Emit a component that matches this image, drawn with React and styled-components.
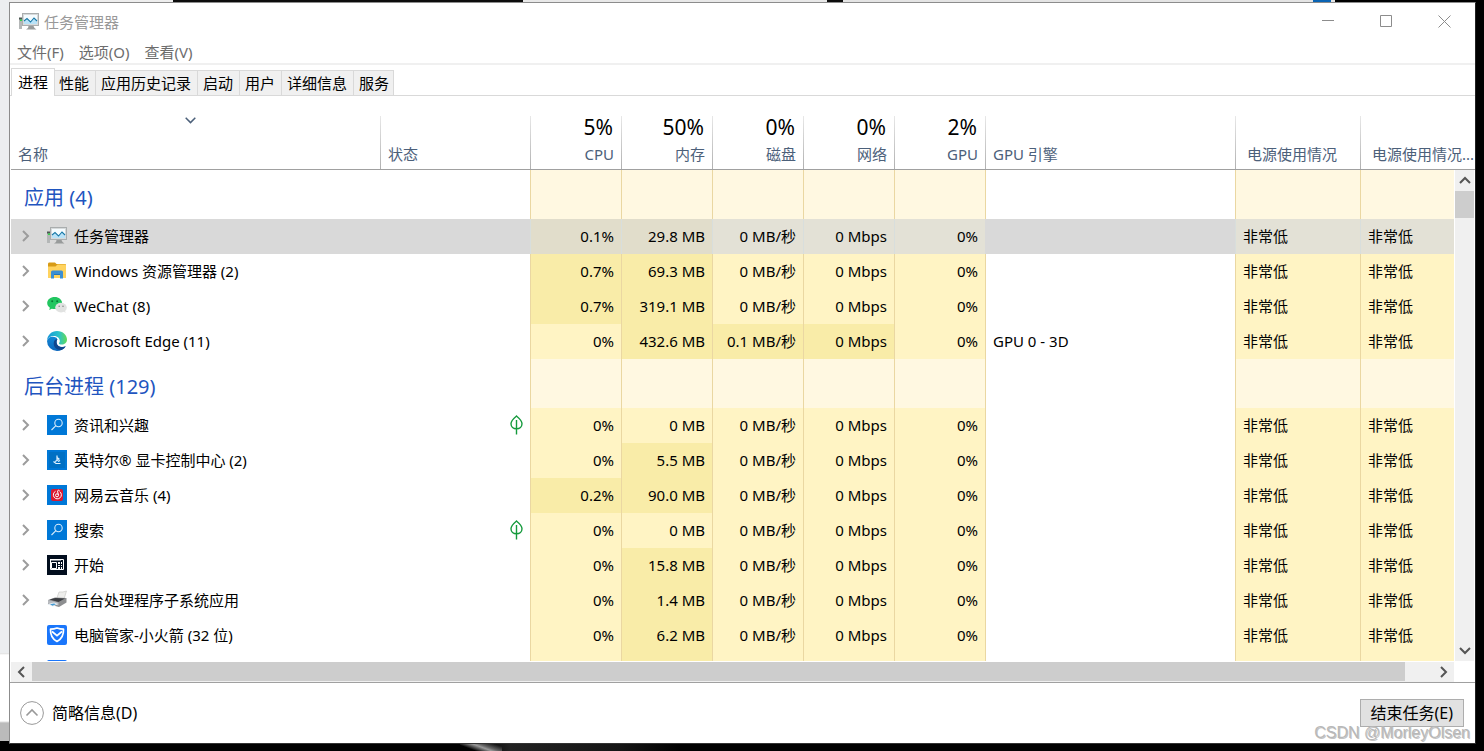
import React from "react";
import styled, { createGlobalStyle, css } from "styled-components";

const columns = [
  { key: "cpu", total: "5%", label: "CPU" },
  { key: "memory", total: "50%", label: "内存" },
  { key: "disk", total: "0%", label: "磁盘" },
  { key: "network", total: "0%", label: "网络" },
  { key: "gpu", total: "2%", label: "GPU" },
];

const idle = { cpu: "0%", memory: "0 MB", disk: "0 MB/秒", network: "0 Mbps", gpu: "0%" };

const groups = [
  {
    title: "应用 (4)",
    rows: [
      { name: "任务管理器", icon: MonitorIcon, cpu: "0.1%", memory: "29.8 MB", hot: ["cpu", "memory"], selected: true },
      { name: "Windows 资源管理器 (2)", icon: FolderIcon, cpu: "0.7%", memory: "69.3 MB", hot: ["cpu", "memory"] },
      { name: "WeChat (8)", icon: WeChatIcon, cpu: "0.7%", memory: "319.1 MB", hot: ["cpu", "memory"] },
      {
        name: "Microsoft Edge (11)",
        icon: EdgeIcon,
        memory: "432.6 MB",
        disk: "0.1 MB/秒",
        engine: "GPU 0 - 3D",
        hot: ["memory", "disk", "network"],
      },
    ],
  },
  {
    title: "后台进程 (129)",
    rows: [
      { name: "资讯和兴趣", icon: SearchIcon, leaf: true },
      { name: "英特尔® 显卡控制中心 (2)", icon: IntelIcon, memory: "5.5 MB", hot: ["memory"] },
      { name: "网易云音乐 (4)", icon: MusicIcon, cpu: "0.2%", memory: "90.0 MB", hot: ["cpu", "memory"] },
      { name: "搜索", icon: SearchIcon, leaf: true },
      { name: "开始", icon: StartIcon, memory: "15.8 MB", hot: ["memory"] },
      { name: "后台处理程序子系统应用", icon: PrinterIcon, memory: "1.4 MB", hot: ["memory"] },
      { name: "电脑管家-小火箭 (32 位)", icon: ShieldIcon, memory: "6.2 MB", hot: ["memory"], single: true },
      { icon: ShieldIcon, hot: ["memory"], single: true, blank: true },
    ],
  },
];

const tabs = ["进程", "性能", "应用历史记录", "启动", "用户", "详细信息", "服务"];

export default function App() {
  return (
    <Desktop>
      <GlobalStyle />
      <Window>
        <TitleBar>
          <MonitorIcon />
          <Title>任务管理器</Title>
          <CaptionButton aria-label="最小化">
            <svg width="13" height="13"><path d="M0 5.500h12" /></svg>
          </CaptionButton>
          <CaptionButton aria-label="最大化">
            <svg width="13" height="13"><path d="M.5.5h11v11H.5z" /></svg>
          </CaptionButton>
          <CaptionButton aria-label="关闭">
            <svg width="13" height="13"><path d="M.5.5l12 12M12.500.5l-12 12" /></svg>
          </CaptionButton>
        </TitleBar>

        <MenuBar>
          <MenuItem>文件(F)</MenuItem>
          <MenuItem>选项(O)</MenuItem>
          <MenuItem>查看(V)</MenuItem>
        </MenuBar>

        <TabList role="tablist">
          {tabs.map((tab, i) => (
            <Tab key={tab} role="tab" aria-selected={i === 0} $active={i === 0}>
              {tab}
            </Tab>
          ))}
        </TabList>

        <Content>
          <Viewport>
            <ProcessTable />
          </Viewport>
          <VerticalScroll>
            <Arrow label="向上滚动" d="M1 8l5-5 5 5" />
            <Thumb $length="27px" />
            <Spacer />
            <Arrow label="向下滚动" d="M1 3l5 5 5-5" />
          </VerticalScroll>
        </Content>
        <HorizontalScroll>
          <Arrow label="向左滚动" d="M8 1L3 6l5 5" />
          <Track>
            <Thumb $length="98%" />
          </Track>
          <Arrow label="向右滚动" d="M3 1l5 5-5 5" />
        </HorizontalScroll>

        <Footer>
          <DetailsButton>
            <svg width="24" height="24" viewBox="0 0 24 24">
              <circle cx="12" cy="12" r="11.400" />
              <path d="M6.500 14.500L12 9l5.500 5.500" strokeWidth="1.600" />
            </svg>
            简略信息(D)
          </DetailsButton>
          <EndTask>结束任务(E)</EndTask>
        </Footer>
      </Window>
      <Watermark>CSDN @MorleyOlsen</Watermark>
    </Desktop>
  );
}

function ProcessTable() {
  return (
    <Table>
      <colgroup>
        <col />
        <Col $width={150} />
        {columns.map((c) => (
          <Col key={c.key} $width={91} />
        ))}
        <Col $width={250} />
        <Col $width={125} />
        <Col $width={115} />
      </colgroup>
      <thead>
        <tr>
          <HeadCell $first>
            <SortMark>
              <svg width="11" height="7"><path d="M.7.8l4.800 4.800L10.300.8" /></svg>
            </SortMark>
            名称
          </HeadCell>
          <HeadCell>状态</HeadCell>
          {columns.map((c) => (
            <HeadCell key={c.key} $number>
              <Total>{c.total}</Total>
              {c.label}
            </HeadCell>
          ))}
          <HeadCell>GPU 引擎</HeadCell>
          <HeadCell $inset>电源使用情况</HeadCell>
          <HeadCell $inset>电源使用情况...</HeadCell>
        </tr>
      </thead>
      {groups.map((group) => (
        <tbody key={group.title}>
          <GroupRow>
            <GroupTitle scope="rowgroup" colSpan={2}>{group.title}</GroupTitle>
            {columns.map((c) => (
              <Heat key={c.key} $level="group" />
            ))}
            <PlainCell $line />
            <Heat $level="group" />
            <Heat $level="group" />
          </GroupRow>
          {group.rows.map((row, i) => (
            <Process key={i} {...row} />
          ))}
        </tbody>
      ))}
    </Table>
  );
}

function Process({ name, icon: Icon, hot = [], selected, leaf, single, blank, engine, ...values }) {
  const usage = { ...idle, ...values };
  const power = blank ? "" : "非常低";
  return (
    <Row $selected={selected}>
      <PlainCell>
        <Name>
          <Expander disabled={single} aria-label="展开">
            {!single && <svg width="8" height="12"><path d="M1 1l5 5-5 5" /></svg>}
          </Expander>
          <Icon />
          {name}
        </Name>
      </PlainCell>
      <PlainCell $right>{leaf && <LeafIcon />}</PlainCell>
      {columns.map((c) => (
        <Heat key={c.key} $right $level={hot.includes(c.key) ? "high" : "low"} $selected={selected}>
          {!blank && usage[c.key]}
        </Heat>
      ))}
      <PlainCell $line={!selected}>{engine}</PlainCell>
      <Heat $level="low" $selected={selected}>{power}</Heat>
      <Heat $level="low" $selected={selected}>{power}</Heat>
    </Row>
  );
}

function Arrow({ label, d }) {
  return (
    <ScrollButton aria-label={label}>
      <svg width="12" height="12"><path d={d} /></svg>
    </ScrollButton>
  );
}

function MonitorIcon() {
  return (
    <Glyph viewBox="0 0 20 20">
      <path d="M0 6h3v11H0z" fill="#b4b7b7" />
      <path d="M0 5.500h3v2H0z" fill="#4c5653" />
      <path d="M1 7.500h2v1.500H1z" fill="#35d34a" />
      <path d="M3 1h17v13H3z" fill="#a9adae" />
      <path d="M4 2h15v11H4z" fill="#d7dadb" />
      <path d="M5 3h13v9H5z" fill="#f5fcff" />
      <path d="M5 9l3-2 3 3 4-4 3 3v3H5z" fill="#b8e2f7" />
      <path d="M5 9l3-2.500 3.500 3.500L15 6l3 3" fill="none" stroke="#1878a8" strokeWidth="1.100" />
      <path d="M9.500 14h5l1 2 2 1.500H7L9 16z" fill="#989b9b" />
    </Glyph>
  );
}

function FolderIcon() {
  return (
    <Glyph viewBox="0 0 20 20">
      <path d="M1 3q0-1.500 1-1.500h6l1.500 1.500H18q1 0 1 1v4H1z" fill="#d79b17" />
      <path d="M1 5.500h7.500L10.500 3.500H18q1 0 1 1V17H1z" fill="#ffd35f" />
      <path d="M4 17.500V11q0-1.500 1.500-1.500h9Q16 9.500 16 11v6.500h-3V13H7v4.500z" fill="#3c8fd3" />
      <path d="M7 13h6v1H7z" fill="#2576b9" />
    </Glyph>
  );
}

function WeChatIcon() {
  return (
    <Glyph viewBox="0 0 20 20">
      <path d="M7.700 1C3.500 1 .2 3.600.2 7c0 2 1.100 3.600 2.700 4.700L2.200 14l2.600-1.300c1 .3 1.900.4 2.900.4 4.100 0 7.400-2.600 7.400-6S11.800 1 7.700 1z" fill="#22c660" />
      <ellipse cx="14" cy="11.600" rx="5.800" ry="4.900" fill="#e1e2e1" />
      <path d="M16 15l2.600 2-.6-3z" fill="#e1e2e1" />
      <circle cx="5.200" cy="5.200" r="1" fill="#087b36" />
      <circle cx="10.200" cy="5.200" r="1" fill="#087b36" />
      <circle cx="12.200" cy="10.300" r=".8" fill="#888" />
      <circle cx="16" cy="10.300" r=".8" fill="#888" />
    </Glyph>
  );
}

function EdgeIcon() {
  return (
    <Glyph viewBox="0 0 20 20">
      <defs>
        <linearGradient id="edge-top" x1="0" x2="1">
          <stop offset="0" stopColor="#1596da" />
          <stop offset=".6" stopColor="#2cc3c8" />
          <stop offset="1" stopColor="#63da55" />
        </linearGradient>
        <linearGradient id="edge-side" x1="0" x2="0" y1="0" y2="1">
          <stop offset="0" stopColor="#1486d4" />
          <stop offset="1" stopColor="#0b66bd" />
        </linearGradient>
      </defs>
      <path d="M0 10a10 10 0 0 0 10 10c3.700 0 6.800-1.600 8.700-4.800-4 1.900-8.700.5-9.200-3.500L10 7C5 4.500 1 6 0 10z" fill="url(#edge-side)" />
      <path d="M7.200 10c-2 5 2 9.800 7.300 8.900 1.800-.8 3.300-2 4.200-3.700-4.300 1.900-9 .3-9.100-4.200 0-1.400.6-2.200 1.200-2.700C9.200 8 7.900 8.700 7.200 10z" fill="#10458d" />
      <path d="M0 9.700C.3 4.200 4.600 0 10 0c6.100 0 10 4.300 10 8.600 0 3.400-2.500 5-5.300 5-1.900 0-2.800-.7-2.800-1.300 0-.5.900-.9.900-2.300C12.800 7.500 10.500 5 7 5 3.500 5 .8 7 0 9.700z" fill="url(#edge-top)" />
    </Glyph>
  );
}

function SearchIcon() {
  return (
    <Glyph viewBox="0 0 20 20">
      <path d="M0 0h20v20H0z" fill="#0078d7" />
      <g fill="none" stroke="#d9ecfb" strokeWidth="1.100">
        <circle cx="11.500" cy="8" r="3.700" />
        <path d="M8.900 10.600L4.500 15" />
      </g>
    </Glyph>
  );
}

function IntelIcon() {
  return (
    <Glyph viewBox="0 0 20 20">
      <path d="M0 0h20v20H0z" fill="#0078d7" />
      <path d="M2 2h16v16H2z" fill="#0070c4" />
      <path d="M10 5.500v5M10 7.500l2 1.500-2 1.500-2 1M6.500 11.500l2.500 2h4.500M11 11.500l2-1" fill="none" stroke="#e2f2ff" strokeWidth="1.200" />
    </Glyph>
  );
}

function MusicIcon() {
  return (
    <Glyph viewBox="0 0 20 20">
      <path d="M0 0h20v20H0z" fill="#0078d7" />
      <rect x="4" y="4" width="12" height="12" rx="2" fill="#dc1930" />
      <g fill="none" stroke="#fff" strokeWidth="1">
        <path d="M8.500 6.300a4 4 0 1 0 4.200.3M12.500 5.500c-1.300-.7-2.300 0-1.800 1.500l.8 3.200" />
        <circle cx="10" cy="10.300" r="1.500" />
      </g>
    </Glyph>
  );
}

function StartIcon() {
  return (
    <Glyph viewBox="0 0 20 20">
      <path d="M0 0h20v20H0z" fill="#020e1e" />
      <path d="M3.500 4.500h13v10h-13z" fill="none" stroke="#fff" />
      <path d="M3 4h11v1.500H3z" fill="#fff" />
      <path d="M4.500 7.500h5v6h-5z" fill="none" stroke="#fff" />
      <path d="M11 7h2v2h-2zM14 7h1v2h-1zM11 10h2v1h-2zM14 10h1v1h-1zM11 12h2v2h-2zM14 12h1v2h-1z" fill="#fff" />
    </Glyph>
  );
}

function PrinterIcon() {
  return (
    <Glyph viewBox="0 0 20 20">
      <path d="M9.500 9l2.500-7q4 .5 7.500-1L17 9z" fill="#eeeeec" stroke="#c3c3c1" strokeWidth=".6" />
      <path d="M1 10l7-2.500L19.500 8v4.500L12 17 1 14z" fill="#8d8e90" />
      <path d="M2.500 9.500L8.500 8l9.500.5L11.500 12z" fill="#3c3e43" />
      <path d="M1 10l10.500 2.500v3L1 13z" fill="#b8bbc0" />
      <path d="M0 14l7-1.500 4 1.500-5 2.500z" fill="#e6edf2" />
      <path d="M3 14.200l4-.7 2 .8-3.500 1.500z" fill="#469ad1" />
    </Glyph>
  );
}

function ShieldIcon() {
  return (
    <Glyph viewBox="0 0 20 20">
      <rect width="20" height="20" rx="2" fill="#1a76fb" />
      <path d="M10 3q3 1.200 6.500 1.200.4 8.500-6.500 12.300Q3.100 12.700 3.500 4.200 7 4.200 10 3z" fill="none" stroke="#fff" strokeWidth="1.700" strokeLinejoin="round" />
      <path d="M5 6.500l5 4.200 5-4.200" fill="none" stroke="#fff" strokeWidth="1.700" />
    </Glyph>
  );
}

function LeafIcon() {
  return (
    <Leaf width="13" height="20" viewBox="0 0 13 20">
      <path d="M6.500 1C3.500 3.500 1 5.500 1 8.800c0 3 2.300 5 5.500 5s5.500-2 5.500-5C12 5.500 9.500 3.500 6.500 1zM6.500 5v14.500" />
    </Leaf>
  );
}

const GlobalStyle = createGlobalStyle`
  * {
    box-sizing: border-box;
  }

  body {
    margin: 0;
    background: #000;
    font: 15px/20px "Noto Sans", "Noto Sans CJK SC", sans-serif;
  }

  button {
    border: 0;
    padding: 0;
    background: none;
    font: inherit;
    color: inherit;
  }

  svg {
    display: block;
    flex: none;
  }
`;

/* slivers of other windows show around the edges */
const Desktop = styled.div`
  position: relative;
  display: flex;
  height: 100vh;
  padding: 2px 8px 7px 9px;
  background:
    linear-gradient(20deg, transparent 25%, #999 50%, #666 60%, transparent 85%) 460px bottom / 42px 8px no-repeat,
    linear-gradient(90deg, transparent 480px, #222 510px, #151515 620px, transparent 680px) left bottom / 100% 7px no-repeat,
    linear-gradient(#eceef0 653px, #ddd 653px, #fff 655px, #fff 721px, #bbb 723px, #bbb 741px, #000 741px) left top / 9px 100% no-repeat,
    linear-gradient(
        90deg,
        #eee 173px,
        #0c0c0c 173px,
        #0c0c0c 523px,
        #e8e8e8 523px,
        #e8e8e8 827px,
        #0c0c0c 827px,
        #0c0c0c 843px,
        #e4e4e4 843px,
        #e4e4e4 1313px,
        #0a64b4 1313px,
        #0a64b4 1331px,
        #e4e4e4 1331px,
        #e4e4e4 1335px,
        #000 1335px
      )
      left top / 100% 2px no-repeat,
    #000;
`;

const Window = styled.main`
  display: flex;
  flex: 1;
  flex-direction: column;
  min-width: 0;
  border: 1px solid #8c8c8c;
  border-right-color: #222;
  border-bottom-color: #333;
  background: #fff;
`;

const TitleBar = styled.header`
  display: flex;
  align-items: center;
  height: 37px;
  padding: 0 2px 0 9px;
  color: #999;
`;

const Title = styled.h1`
  flex: 1;
  margin: 0 0 0 5px;
  font-size: 15px;
  font-weight: 400;
`;

const CaptionButton = styled.button`
  display: flex;
  align-items: center;
  justify-content: center;
  width: 58px;
  height: 100%;

  path {
    fill: none;
    stroke: #8c8c8c;
  }
`;

const MenuBar = styled.nav`
  display: flex;
  gap: 15px;
  height: 25px;
  padding-left: 7px;
  border-bottom: 2px solid #f0f0f0;
  color: #6d6d6d;
`;

const MenuItem = styled.button`
  line-height: 24px;
`;

const TabList = styled.div`
  display: flex;
  align-items: flex-end;
  height: 31px;
  padding-left: 2px;
  box-shadow: inset 0 -1px #d9d9d9;
`;

const Tab = styled.button`
  height: 26px;
  padding: 0 6px 0 5px;
  border: solid #d9d9d9;
  border-width: 1px 0 1px 1px;
  background: #f0f0f0;

  &:last-child {
    padding-right: 4px;
    border-right-width: 1px;
  }

  ${({ $active }) =>
    $active &&
    css`
      position: relative;
      height: 28px;
      margin: 0 -2px 0 -1px;
      padding: 0 6px 2px;
      border-width: 1px 1px 0;
      background: #fff;
    `}
`;

/* the scroll bar shares the table's grid cell, so the header runs above it */
const Content = styled.div`
  display: grid;
  flex: 1;
  grid-template: minmax(0, 1fr) / minmax(0, 1fr);
  min-height: 0;
  padding: 0 0 1px 1px;
`;

const Viewport = styled.div`
  grid-area: 1 / 1;
  overflow: hidden;
`;

const Table = styled.table`
  width: 100%;
  table-layout: fixed;
  border-spacing: 0;
`;

const Col = styled.col`
  width: ${({ $width }) => $width}px;
`;

const HeadCell = styled.th`
  height: 74px;
  padding: 0 ${({ $number }) => ($number ? 7 : 0)}px 5px ${({ $inset }) => ($inset ? 12 : 8)}px;
  border-bottom: 1px solid #a0a0a0;
  background: ${({ $first }) =>
    $first ? "none" : "linear-gradient(#e8e8e8, #b0b0b0) left bottom / 1px calc(100% - 20px) no-repeat"};
  color: #4c607a;
  font-weight: 400;
  text-align: ${({ $number }) => ($number ? "right" : "left")};
  vertical-align: bottom;
  white-space: nowrap;

  ${({ $first }) => $first && "padding-left: 7px;"}
`;

const Total = styled.div`
  margin: 0 1px 5px 0;
  color: #000;
  font-size: 21px;
  line-height: 24px;
`;

const SortMark = styled.div`
  display: flex;
  justify-content: center;
  margin-bottom: 20px;
  padding-right: 17px;

  path {
    fill: none;
    stroke: #4c607a;
    stroke-width: 1.5;
  }
`;

const GroupRow = styled.tr`
  height: 49px;
`;

const GroupTitle = styled.th`
  padding: 6px 0 0 13px;
  color: #1f55bf;
  font-size: 20px;
  font-weight: 400;
  line-height: 28px;
  text-align: left;
`;

const Row = styled.tr`
  height: 35px;
  background: ${({ $selected }) => ($selected ? "#d9d9d9" : "none")};
`;

const PlainCell = styled.td`
  padding: 0 7px 2px;
  border-left: ${({ $line }) => ($line ? "1px solid #ead7a2" : "0")};
  text-align: ${({ $right }) => ($right ? "right" : "left")};
  white-space: nowrap;

  &:first-child {
    padding: 0 0 2px 11px;
  }
`;

const heat = { group: "#fff8e1", low: "#fff4c4", high: "#f9eca8" };

const Heat = styled(PlainCell)`
  border-left: 1px solid ${({ $selected }) => ($selected ? "#d8dedc" : "#ead7a2")};
  background: ${({ $level, $selected }) =>
    $selected ? ($level === "high" ? "#e1ddcb" : "#e3e1d6") : heat[$level]};
`;

const Name = styled.div`
  display: flex;
  align-items: center;

  > svg {
    margin-right: 7px;
  }
`;

const Expander = styled.button`
  display: flex;
  width: 25px;

  path {
    fill: none;
    stroke: #9c9c9c;
    stroke-width: 2;
  }
`;

const Glyph = styled.svg`
  width: 20px;
  height: 20px;
`;

const Leaf = styled.svg`
  margin-left: auto;
  fill: none;
  stroke: #149a3c;
  stroke-width: 1.4;
`;

const VerticalScroll = styled.div`
  display: flex;
  grid-area: 1 / 1;
  flex-direction: column;
  justify-self: end;
  width: 21px;
  margin-top: 74px;
  border: solid #fff;
  border-width: 0 1px;
  background: #f0f0f0;
`;

const HorizontalScroll = styled.div`
  display: flex;
  height: 20px;
  margin: 0 21px 0 1px;
  background: #f0f0f0;
`;

const Track = styled.div`
  display: flex;
  flex: 1;
  padding: 0 0 1px;
`;

const Spacer = styled.div`
  flex: 1;
`;

const Thumb = styled.div`
  flex: 0 0 ${({ $length }) => $length};
  background: #cdcdcd;
`;

const ScrollButton = styled.button`
  display: flex;
  flex: 0 0 21px;
  align-items: center;
  justify-content: center;

  path {
    fill: none;
    stroke: #555;
    stroke-width: 2;
  }
`;

const Footer = styled.footer`
  display: flex;
  align-items: center;
  justify-content: space-between;
  height: 61px;
  padding: 0 11px 0 10px;
  border-top: 1px solid #a0a0a0;
  font-size: 16px;
`;

const DetailsButton = styled.button`
  display: flex;
  align-items: center;
  gap: 8px;

  circle,
  path {
    fill: none;
    stroke: #999;
  }
`;

const EndTask = styled.button`
  height: 28px;
  padding: 0 10px;
  border: 1px solid #adadad;
  background: #e1e1e1;
`;

const Watermark = styled.div`
  position: absolute;
  right: 14px;
  bottom: 8px;
  color: #b8b8b8;
  font: 16px/20px "Liberation Sans", sans-serif;
  text-shadow: 1px 1px #8a8a8a80;
  pointer-events: none;
`;
